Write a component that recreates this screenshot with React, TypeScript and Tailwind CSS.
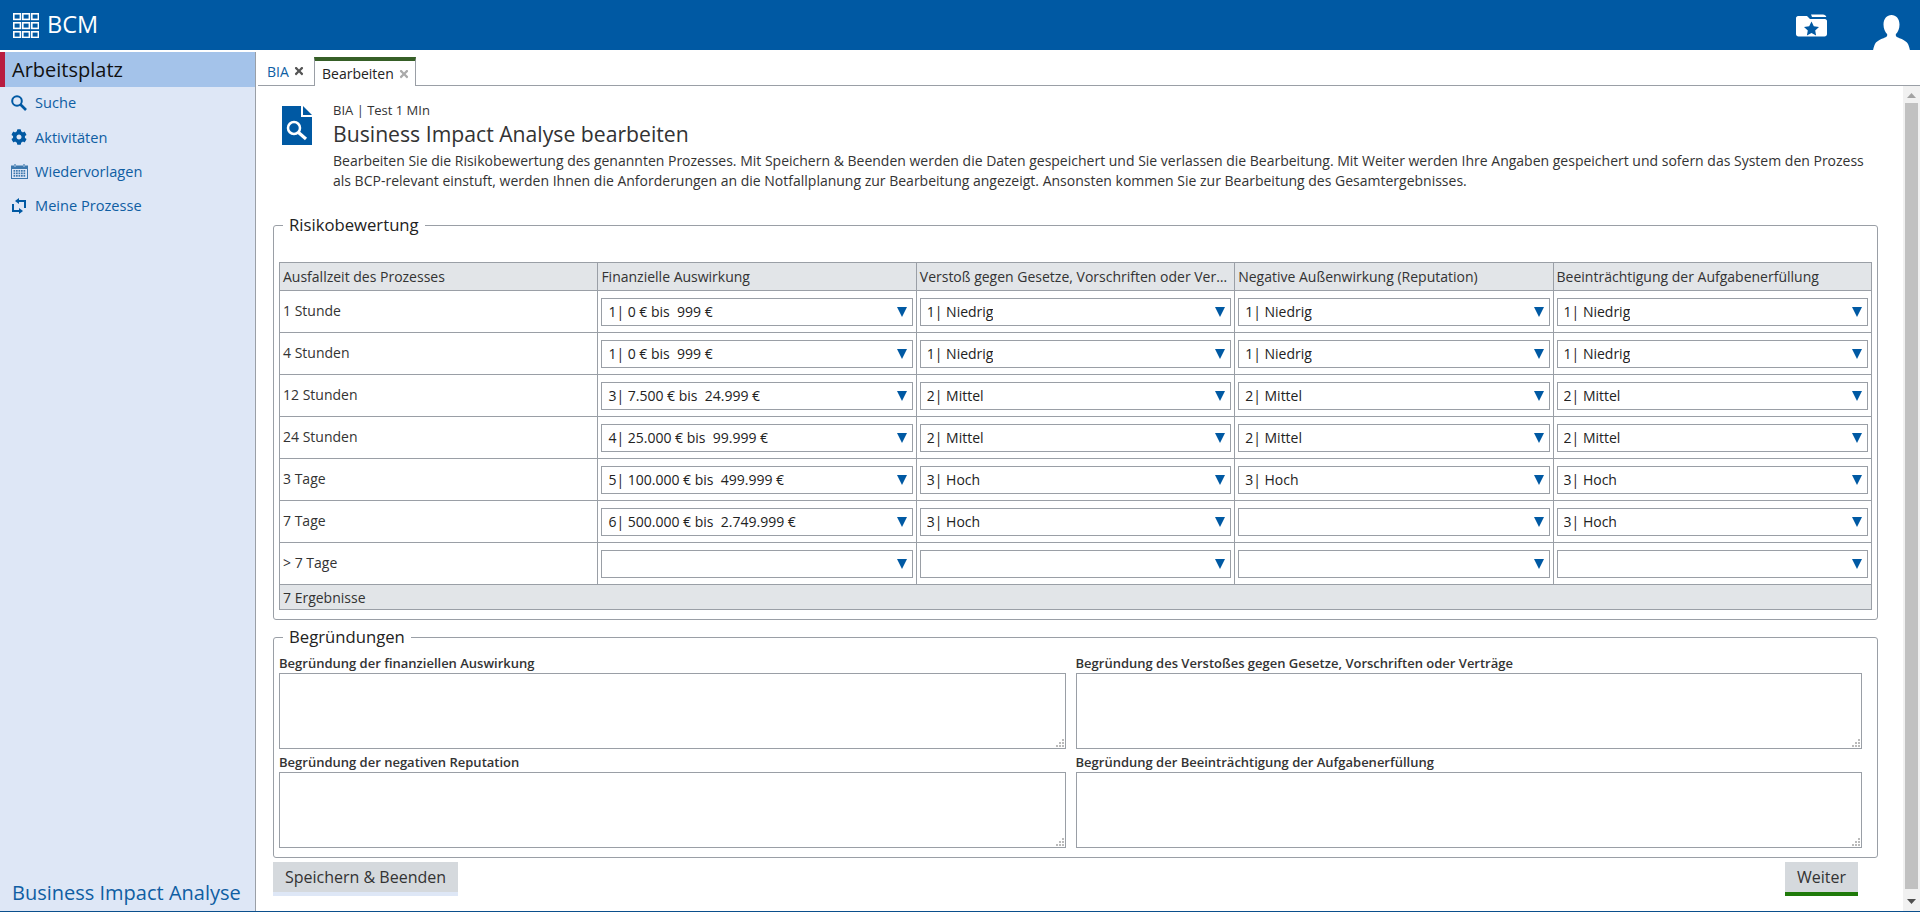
import React from 'react';
import { FaCog, FaTimes } from 'react-icons/fa';

const spalten = [
  'Ausfallzeit des Prozesses',
  'Finanzielle Auswirkung',
  'Verstoß gegen Gesetze, Vorschriften oder Verträge',
  'Negative Außenwirkung (Reputation)',
  'Beeinträchtigung der Aufgabenerfüllung',
];

const zeilen = [
  ['1 Stunde', '1| 0 € bis  999 €', '1| Niedrig', '1| Niedrig', '1| Niedrig'],
  ['4 Stunden', '1| 0 € bis  999 €', '1| Niedrig', '1| Niedrig', '1| Niedrig'],
  ['12 Stunden', '3| 7.500 € bis  24.999 €', '2| Mittel', '2| Mittel', '2| Mittel'],
  ['24 Stunden', '4| 25.000 € bis  99.999 €', '2| Mittel', '2| Mittel', '2| Mittel'],
  ['3 Tage', '5| 100.000 € bis  499.999 €', '3| Hoch', '3| Hoch', '3| Hoch'],
  ['7 Tage', '6| 500.000 € bis  2.749.999 €', '3| Hoch', '', '3| Hoch'],
  ['> 7 Tage', '', '', '', ''],
];

const begruendungen = [
  'Begründung der finanziellen Auswirkung',
  'Begründung des Verstoßes gegen Gesetze, Vorschriften oder Verträge',
  'Begründung der negativen Reputation',
  'Begründung der Beeinträchtigung der Aufgabenerfüllung',
];

function GridIcon() {
  const felder = [0, 9, 18];
  return (
    <svg width="26" height="25" viewBox="0 0 26 25" fill="none" stroke="#fff" strokeWidth="1.6">
      {felder.map((y) =>
        felder.map((x) => <rect key={`${x}-${y}`} x={x + 0.8} y={y + 0.8} width="6.6" height="5.6" />)
      )}
    </svg>
  );
}

function FolderIcon() {
  return (
    <svg width="31" height="24" viewBox="0 0 31 24">
      <path d="M15 1.5h12c1.5 0 3 1 3.3 2.5H16z" fill="#fff" />
      <path d="M2 3h9l3 3h15c1 0 2 1 2 2v13c0 1.500-1 2.500-2.500 2.500H2.500C1 23.500 0 22.500 0 21V5c0-1 1-2 2-2z" fill="#fff" />
      <path d="M15.500 8.500l2.300 4.700 5.200.7-3.800 3.600.9 5.100-4.600-2.500-4.600 2.500.9-5.100L8 13.900l5.200-.7z" fill="#0059a3" />
    </svg>
  );
}

function PersonIcon() {
  return (
    <svg width="37" height="35" viewBox="0 0 37 35" fill="#fff">
      <path d="M18.500 0c4.500 0 8 3.800 8 9.500 0 4-1.500 7.500-3.500 9.500-.5 1-.3 2.300.8 3 3 1.500 9 3 11.200 7 .8 1.500 1.500 4 2 6.500H0c.5-2.500 1.200-5 2-6.500 2.200-4 8.200-5.500 11.200-7 1.100-.7 1.300-2 .8-3-2-2-3.500-5.500-3.500-9.500C10.500 3.800 14 0 18.500 0z" />
    </svg>
  );
}

function SucheIcon() {
  return (
    <svg width="16" height="16" viewBox="0 0 16 16" fill="none" stroke="#0059a3">
      <circle cx="6" cy="6" r="4.800" strokeWidth="2" />
      <path d="M9.500 9.500L15 15" strokeWidth="2.600" />
    </svg>
  );
}

function KalenderIcon() {
  return (
    <svg width="17" height="15" viewBox="0 0 17 15">
      <path d="M0 1.500h17V15H0z" fill="#3d78ad" />
      <rect x="1" y="5" width="15" height="9" fill="#dee7f6" />
      <rect x="3" y="0" width="2" height="3" fill="#7ea6cc" />
      <rect x="12" y="0" width="2" height="3" fill="#7ea6cc" />
      {[6, 8.500, 11].map((y) =>
        [2.500, 5, 7.500, 10, 12.500].map((x) => <rect key={`${x}-${y}`} x={x} y={y} width="1.700" height="1.700" fill="#3d78ad" />)
      )}
    </svg>
  );
}

function ProzessIcon() {
  return (
    <svg width="16" height="16" viewBox="0 0 16 16" fill="#0059a3" stroke="none">
      <polygon points="4,3 8,0 8,6" />
      <polygon points="12,13 8,10 8,16" />
      <path d="M8 3H14V10M8 13H2V6" fill="none" stroke="#0059a3" strokeWidth="2" />
    </svg>
  );
}

function DokumentIcon() {
  return (
    <svg width="30" height="39" viewBox="0 0 30 39">
      <path d="M0 0h19v11h11v28H0z" fill="#0059a3" />
      <path d="M21 0l9 9h-9z" fill="#0059a3" />
      <circle cx="12" cy="22" r="6" fill="none" stroke="#fff" strokeWidth="2.500" />
      <path d="M16.500 26.500L24 33" stroke="#fff" strokeWidth="3.200" />
    </svg>
  );
}

function Griff() {
  return (
    <svg width="8" height="8" viewBox="0 0 8 8" fill="#bbb" className="absolute right-[2px] bottom-[2px]">
      <rect x="6" y="0" width="2" height="2" />
      <rect x="3" y="3" width="2" height="2" />
      <rect x="6" y="3" width="2" height="2" />
      <rect x="0" y="6" width="2" height="2" />
      <rect x="3" y="6" width="2" height="2" />
      <rect x="6" y="6" width="2" height="2" />
    </svg>
  );
}

function Auswahl({ wert }: { wert: string }) {
  return (
    <div className="flex items-center justify-between h-[28px] border border-[#9a9fa6] bg-white pl-[6px] pr-[5px]">
      <span className="text-[14px] text-[#222] whitespace-pre truncate">{wert}</span>
      <svg width="10" height="10" viewBox="0 0 10 10" className="shrink-0">
        <polygon points="0,0 10,0 5,10" fill="#0059a3" />
      </svg>
    </div>
  );
}

function MenuPunkt({ icon, text }: { icon: React.ReactNode; text: string }) {
  return (
    <div className="flex items-center h-[34.300px] pl-[11px] text-[#0f5ea3] text-[14.600px]">
      <span className="w-[24px] flex items-center text-[#0059a3]">{icon}</span>
      {text}
    </div>
  );
}

export default function App() {
  return (
    <div className="h-screen flex flex-col overflow-hidden bg-white text-[#333] font-['Open_Sans',sans-serif]">
      <header className="h-[50px] shrink-0 bg-[#0059a3] flex items-center justify-between pl-[13px] text-white">
        <div className="flex items-center gap-[8px]">
          <GridIcon />
          <span className="text-[23.500px] leading-none">BCM</span>
        </div>
        <div className="flex items-end h-full pr-[10px]">
          <span className="mb-[13px] mr-[46px]"><FolderIcon /></span>
          <PersonIcon />
        </div>
      </header>

      <div className="flex-1 min-h-0 flex mt-[2px] border-b border-[#0b4f8c]">
        <aside className="w-[256px] shrink-0 bg-[#dee7f6] border-r border-[#9a9fa6] flex flex-col">
          <div className="h-[35px] bg-[#a4c3ea] border-l-[5px] border-[#b81c40] pl-[7px] flex items-center text-[20px] text-[#111]">
            Arbeitsplatz
          </div>
          <nav className="-mt-[1px] flex flex-col">
            <MenuPunkt icon={<SucheIcon />} text="Suche" />
            <MenuPunkt icon={<FaCog size={16} />} text="Aktivitäten" />
            <MenuPunkt icon={<KalenderIcon />} text="Wiedervorlagen" />
            <MenuPunkt icon={<ProzessIcon />} text="Meine Prozesse" />
          </nav>
          <div className="mt-auto pb-[3px] pl-[12px] text-[20px] text-[#0f5ea3]">Business Impact Analyse</div>
        </aside>

        <main className="flex-1 min-w-0 flex flex-col">
          <div className="h-[34px] shrink-0 ml-[2px] flex items-end border-b border-[#9a9fa6]">
            <div className="w-[56px] h-[28px] flex items-center pl-[9px] gap-[4px] text-[14px] text-[#0f5ea3]">
              BIA <FaTimes size={12} className="text-[#555]" />
            </div>
            <div className="w-[102px] h-[29px] -mb-px bg-white border-x border-[#9a9fa6] border-t-4 border-t-[#365f27] flex items-center pl-[7px] gap-[4px] text-[14px] text-[#222]">
              Bearbeiten <FaTimes size={12} className="text-[#aaa]" />
            </div>
          </div>

          <div className="flex-1 min-h-0 flex">
            <div className="flex-1 min-w-0 pl-[17px] pr-[25px] pt-[15px]">
              <div className="flex pl-[9px] gap-[21px]">
                <div className="pt-[5px] shrink-0"><DokumentIcon /></div>
                <div>
                  <div className="text-[13px] leading-[18px]">BIA | Test 1 MIn</div>
                  <h1 className="text-[21.200px] leading-[30px]">Business Impact Analyse bearbeiten</h1>
                  <p className="mt-[2px] text-[14px] leading-[20px]">
                    Bearbeiten Sie die Risikobewertung des genannten Prozesses. Mit Speichern &amp; Beenden werden die Daten gespeichert und Sie verlassen die Bearbeitung. Mit Weiter werden Ihre Angaben gespeichert und sofern das System den Prozess als BCP-relevant einstuft, werden Ihnen die Anforderungen an die Notfallplanung zur Bearbeitung angezeigt. Ansonsten kommen Sie zur Bearbeitung des Gesamtergebnisses.
                  </p>
                </div>
              </div>

              <fieldset className="mt-[23px] border border-[#9a9fa6] rounded-[3px] pl-[5px] pr-[5px] pb-[9px]">
                <legend className="ml-[4px] px-[6px] text-[16.700px] leading-[22px] text-[#222]">Risikobewertung</legend>
                <table className="mt-[26px] w-full table-fixed border-collapse text-[14px]">
                  <thead>
                    <tr className="h-[28px] bg-[#e2e5e8]">
                      {spalten.map((s) => (
                        <th key={s} className="border border-[#9a9fa6] px-[3px] font-normal text-left truncate">{s}</th>
                      ))}
                    </tr>
                  </thead>
                  <tbody>
                    {zeilen.map((z) => (
                      <tr key={z[0]} className="h-[42px]">
                        <td className="border border-[#9a9fa6] px-[3px] pb-[2px]">{z[0]}</td>
                        {z.slice(1).map((wert, i) => (
                          <td key={i} className="border border-[#9a9fa6] px-[3px]"><Auswahl wert={wert} /></td>
                        ))}
                      </tr>
                    ))}
                  </tbody>
                  <tfoot>
                    <tr className="h-[25px] bg-[#e2e5e8]">
                      <td colSpan={5} className="border border-[#9a9fa6] px-[3px]">7 Ergebnisse</td>
                    </tr>
                  </tfoot>
                </table>
              </fieldset>

              <fieldset className="mt-[6px] border border-[#9a9fa6] rounded-[3px] pl-[5px] pr-[15px] pb-[9px]">
                <legend className="ml-[4px] px-[6px] text-[16.700px] leading-[22px] text-[#222]">Begründungen</legend>
                <div className="mt-[6px] grid grid-cols-2 gap-x-[10px] gap-y-[4px]">
                  {begruendungen.map((b) => (
                    <label key={b} className="block">
                      <span className="block text-[13px] leading-[18px] font-semibold">{b}</span>
                      <span className="block relative mt-px">
                        <textarea className="block w-full h-[76px] border border-[#9a9fa6] resize-none" />
                        <Griff />
                      </span>
                    </label>
                  ))}
                </div>
              </fieldset>

              <div className="mt-[4px] pr-[20px] flex justify-between">
                <button className="w-[185px] h-[34px] bg-[#d5d9dd] border-b-4 border-[#dee7f6] text-[16px]">Speichern &amp; Beenden</button>
                <button className="w-[73px] h-[34px] bg-[#d5d9dd] border-b-4 border-[#1f7a0a] text-[16px]">Weiter</button>
              </div>
            </div>

            <div className="w-[17px] shrink-0 bg-[#f1f1f1] flex flex-col items-center">
              <svg width="9" height="5" viewBox="0 0 9 5" className="mt-[7px] mb-[5px]"><polygon points="4.500,0 9,5 0,5" fill="#a3a3a3" /></svg>
              <div className="w-[13px] flex-1 bg-[#c1c1c1]" />
              <svg width="9" height="5" viewBox="0 0 9 5" className="mt-[10px] mb-[7px]"><polygon points="0,0 9,0 4.500,5" fill="#505050" /></svg>
            </div>
          </div>
        </main>
      </div>
    </div>
  );
}
